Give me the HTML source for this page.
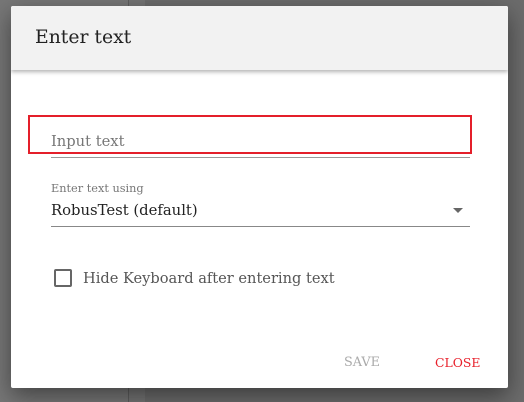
<!DOCTYPE html>
<html><head><meta charset="utf-8"><style>
html,body{margin:0;padding:0;width:524px;height:402px;overflow:hidden;background:#6c6c6c;font-family:"DejaVu Serif","Liberation Serif",serif;}
.bgl{position:absolute;left:0;top:0;width:128px;height:402px;background:#777;}
.bgm{position:absolute;left:128px;top:0;width:16px;height:402px;background:#757575;border-left:1px solid #5e5e5e;}
.dlg{position:absolute;left:11px;top:6px;width:497px;height:382px;background:#fff;border-radius:2px;box-shadow:0 8px 24px rgba(0,0,0,.45);overflow:hidden;}
.hdr{position:absolute;left:0;top:0;width:497px;height:64px;background:#f2f2f2;box-shadow:0 2px 4px rgba(0,0,0,.3);}
.t{position:absolute;left:24px;top:21px;font-size:18.8px;color:#222;white-space:nowrap;}
.red{position:absolute;left:17px;top:109px;width:440px;height:35px;border:2px solid #e41f2a;}
.ph{position:absolute;left:40px;top:127px;font-size:14.7px;color:#777;white-space:nowrap;}
.ul1{position:absolute;left:40px;top:151px;width:419px;height:1px;background:#999;}
.lb{position:absolute;left:40px;top:176px;font-size:11.3px;color:#777;white-space:nowrap;}
.sel{position:absolute;left:40px;top:196px;font-size:14.8px;color:#222;white-space:nowrap;}
.ar{position:absolute;left:442px;top:202px;width:0;height:0;border-left:5px solid transparent;border-right:5px solid transparent;border-top:5px solid #666;}
.ul2{position:absolute;left:40px;top:220px;width:419px;height:1px;background:#888;}
.cb{position:absolute;left:43px;top:263px;width:14px;height:14px;border:2px solid #666;border-radius:2px;}
.cl{position:absolute;left:72px;top:264px;font-size:14.6px;color:#555;white-space:nowrap;}
.save{position:absolute;left:333px;top:349px;font-size:12.8px;color:#aaa;}
.close{position:absolute;left:424px;top:349px;font-size:12.4px;color:#e8202b;}
</style></head><body>
<div class="bgl"></div><div class="bgm"></div>
<div class="dlg">
<div class="hdr"><div class="t">Enter text</div></div>
<div class="red"></div>
<div class="ph">Input text</div>
<div class="ul1"></div>
<div class="lb">Enter text using</div>
<div class="sel">RobusTest (default)</div>
<div class="ar"></div>
<div class="ul2"></div>
<div class="cb"></div>
<div class="cl">Hide Keyboard after entering text</div>
<div class="save">SAVE</div>
<div class="close">CLOSE</div>
</div>
</body></html>
